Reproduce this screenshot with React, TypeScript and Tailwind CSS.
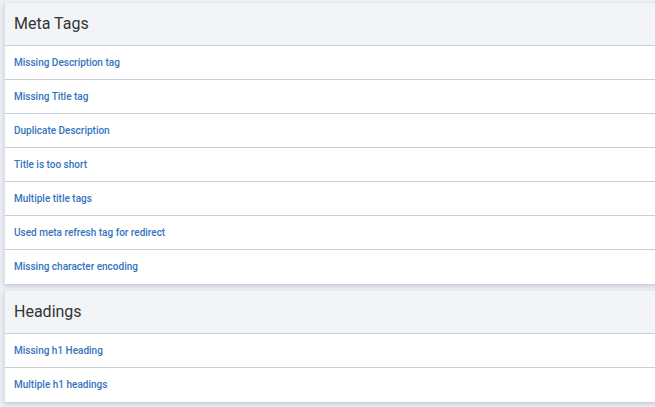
import React from "react";

const sections = [
  {
    title: "Meta Tags",
    items: [
      "Missing Description tag",
      "Missing Title tag",
      "Duplicate Description",
      "Title is too short",
      "Multiple title tags",
      "Used meta refresh tag for redirect",
      "Missing character encoding",
    ],
  },
  {
    title: "Headings",
    items: ["Missing h1 Heading", "Multiple h1 headings"],
  },
];

export default function App() {
  return (
    <div
      className="min-h-[407px] w-[655px] overflow-hidden bg-[#eceff4] pl-[4px] pt-[3px] flex flex-col gap-[7px]"
      style={{ fontFamily: "Roboto, 'Noto Sans', sans-serif" }}
    >
      {sections.map((s) => (
        <div
          key={s.title}
          className="w-[700px] bg-white shadow-[0_2px_4px_rgba(120,135,160,0.35)] border-l border-[#dde2ea]"
        >
          <div className="h-[43px] bg-[#f3f4f8] border-b border-[#c8cfd9] flex items-center pl-[9px]">
            <span className="text-[16px] text-[#333333] leading-none">{s.title}</span>
          </div>
          {s.items.map((it, i) => (
            <div
              key={it}
              className={`h-[34px] flex items-center pl-[9px] ${
                i < s.items.length - 1 ? "border-b border-[#c8cfd9]" : ""
              }`}
            >
              <a className="text-[10px] font-medium text-[#3474bd] leading-none cursor-pointer">{it}</a>
            </div>
          ))}
        </div>
      ))}
    </div>
  );
}
